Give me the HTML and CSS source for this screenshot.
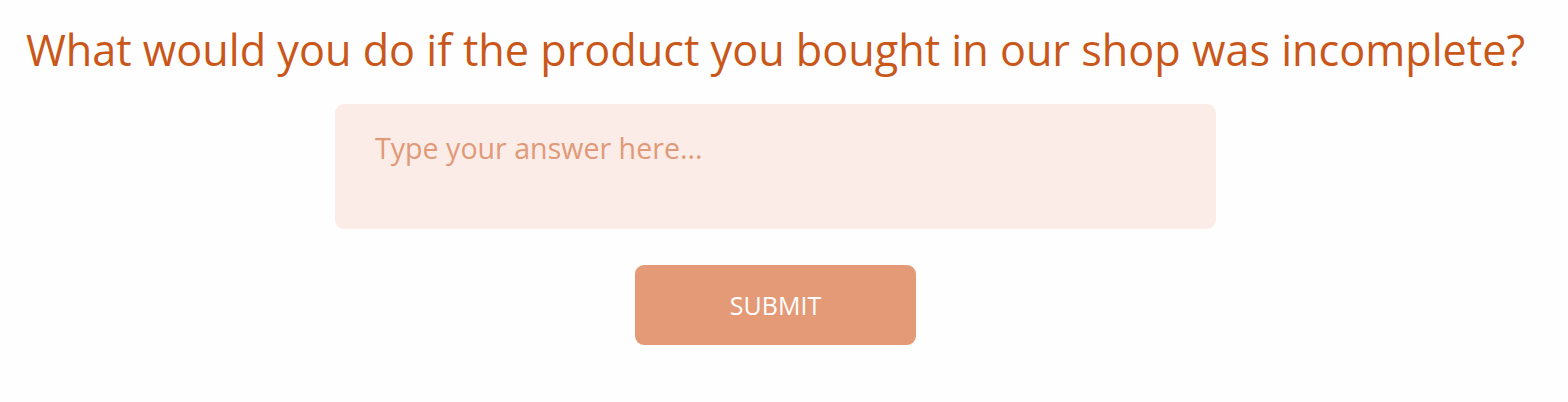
FILE: index.html
```html
<!DOCTYPE html>
<html lang="en">
<head>
    <meta charset="UTF-8">
    <meta name="viewport" content="width=device-width, initial-scale=1.0">
    <title>Question</title>
    <link rel="stylesheet" href="styles.css">
</head>
<body>

    <!-- Pregunta -->
    <main class="question">
        <h1 class="question-title">What would you do if the product you bought in our shop was incomplete?</h1>

        <textarea class="answer" placeholder="Type your answer here..."></textarea>

        <button class="submit-btn">SUBMIT</button>
    </main>

</body>
</html>
```

FILE: styles.css
```css
body {
    font-family: "Open Sans", sans-serif;
    margin: 0;
    padding: 0;
    background-color: #fffefe;
}

.question {
    display: flex;
    flex-direction: column;
    align-items: center;
    padding: 22px 17px 0 0;
}

.question-title {
    color: #c9571a;
    font-size: 43.2px;
    font-weight: 400;
    margin: 0;
    line-height: 56px;
}

.answer {
    width: 881px;
    height: 125px;
    box-sizing: border-box;
    margin-top: 26px;
    padding: 24px 40px;
    border: none;
    border-radius: 9px;
    background-color: #fbece8;
    font-family: "Open Sans", sans-serif;
    font-size: 28.6px;
    color: #c9571a;
    resize: none;
    outline: none;
}

.answer::placeholder {
    color: #e09a78;
}

.submit-btn {
    margin-top: 36px;
    width: 281px;
    height: 80px;
    border: none;
    border-radius: 9px;
    background-color: #e59a77;
    color: white;
    font-family: "Open Sans", sans-serif;
    font-size: 25px;
    font-weight: 500;
    cursor: pointer;
}
```
